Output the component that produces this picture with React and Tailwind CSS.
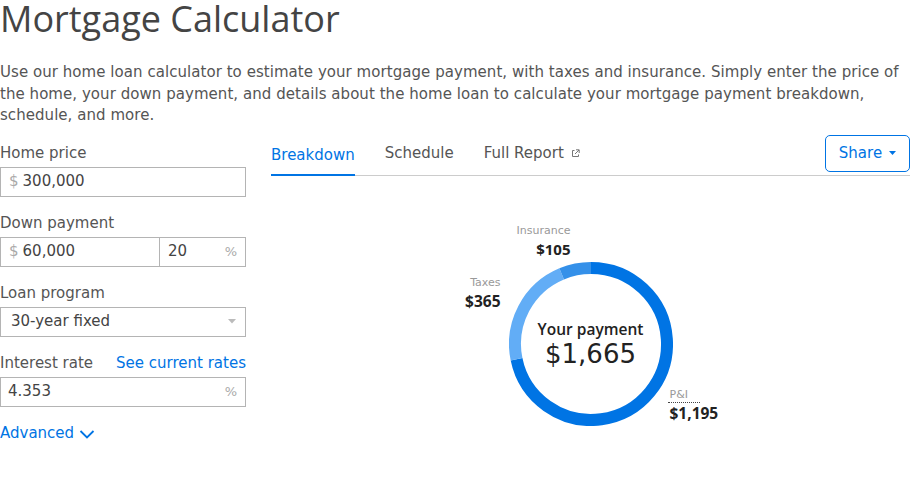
import React from "react";

const BLUE = "#0074e4";
const OPEN = { fontFamily: '"Open Sans", sans-serif' };

function polar(cx, cy, r, deg) {
  const a = ((deg - 90) * Math.PI) / 180;
  return [cx + r * Math.cos(a), cy + r * Math.sin(a)];
}

function Arc({ start, end, color }) {
  const r = 76;
  const [x1, y1] = polar(82, 82, r, start);
  const [x2, y2] = polar(82, 82, r, end);
  const large = end - start > 180 ? 1 : 0;
  return (
    <path
      d={`M ${x1} ${y1} A ${r} ${r} 0 ${large} 1 ${x2} ${y2}`}
      fill="none"
      stroke={color}
      strokeWidth="12"
    />
  );
}

function Donut() {
  const total = 1665;
  const pi = (1195 / total) * 360;
  const tx = (365 / total) * 360;
  return (
    <div className="relative w-[164px] h-[164px]">
      <svg width="164" height="164" viewBox="0 0 164 164" className="block">
        <Arc start={0} end={pi} color="#0074e4" />
        <Arc start={pi} end={pi + tx} color="#62adf6" />
        <Arc start={pi + tx} end={360} color="#3490e9" />
      </svg>
      <div className="absolute inset-0 flex flex-col items-center justify-center pt-[3px]">
        <div className="text-[15.5px] leading-[18px] font-semibold text-[#222]" style={OPEN}>Your payment</div>
        <div className="text-[26px] leading-[32px] text-[#222]">$1,665</div>
      </div>
      <div className="absolute top-[-39px] right-[102px] text-right whitespace-nowrap">
        <div className="text-[11px] leading-[16px] text-[#999]">Insurance</div>
        <div className="text-[15px] leading-[20px] font-bold text-[#222]" style={OPEN}>$105</div>
      </div>
      <div className="absolute top-[13px] right-[172px] text-right whitespace-nowrap">
        <div className="text-[11px] leading-[16px] text-[#999]">Taxes</div>
        <div className="text-[15.5px] leading-[20px] font-bold text-[#222]" style={OPEN}>$365</div>
      </div>
      <div className="absolute top-[125px] left-[161px] whitespace-nowrap">
        <div className="text-[11px] leading-[16px] text-[#999] border-b border-dotted border-[#444] w-[32px] h-[16px] -ml-[2px] pl-[2px]">P&amp;I</div>
        <div className="text-[15.5px] leading-[20px] font-bold text-[#222]" style={OPEN}>$1,195</div>
      </div>
    </div>
  );
}

function Field({ children }) {
  return (
    <div className="h-[30px] border border-[#b4b4b4] flex items-center px-[8px] text-[15px] text-[#444] bg-white">
      {children}
    </div>
  );
}

function Label({ children }) {
  return <div className="h-[20px] leading-[20px] text-[15px] text-[#555] mb-[4px]">{children}</div>;
}

export default function App() {
  return (
    <div
      className="w-[910px] h-[490px] bg-white overflow-hidden"
      style={{ fontFamily: '"DejaVu Sans", "Open Sans", sans-serif' }}
    >
      <h1 className="text-[36px] leading-[38px] text-[#444] font-normal" style={OPEN}>
        Mortgage Calculator
      </h1>
      <p className="mt-[24px] text-[15px] leading-[21.5px] text-[#555] tracking-[0.05px]">
        Use our home loan calculator to estimate your mortgage payment, with taxes and insurance. Simply enter the price of
        <br />
        the home, your down payment, and details about the home loan to calculate your mortgage payment breakdown,
        <br />
        schedule, and more.
      </p>
      <div className="flex gap-[25px] mt-[8px]">
        <div className="w-[246px] flex flex-col gap-[16px] pt-[8px]">
          <div>
            <Label>Home price</Label>
            <Field>
              <span className="text-[#aaa] mr-[4px]">$</span>300,000
            </Field>
          </div>
          <div>
            <Label>Down payment</Label>
            <div className="flex">
              <div className="w-[160px]">
                <Field>
                  <span className="text-[#aaa] mr-[4px]">$</span>60,000
                </Field>
              </div>
              <div className="flex-1 -ml-px">
                <Field>
                  <span className="flex-1">20</span>
                  <span className="text-[#aaa] text-[13px]">%</span>
                </Field>
              </div>
            </div>
          </div>
          <div>
            <Label>Loan program</Label>
            <div className="h-[30px] border border-[#b4b4b4] flex items-center pl-[10px] pr-[9px] text-[15px] text-[#444]">
              <span className="flex-1">30-year fixed</span>
              <svg width="8" height="5" viewBox="0 0 8 5"><path d="M0 0h8L4 4.5z" fill="#bbb" /></svg>
            </div>
          </div>
          <div>
            <div className="flex justify-between h-[20px] leading-[20px] text-[15px] mb-[4px]">
              <span className="text-[#555]">Interest rate</span>
              <span style={{ color: BLUE }}>See current rates</span>
            </div>
            <Field>
              <span className="flex-1 -ml-[1px]">4.353</span>
              <span className="text-[#aaa] text-[13px]">%</span>
            </Field>
          </div>
          <div className="flex items-center gap-[5px] h-[20px] text-[15px] mt-[1px]" style={{ color: BLUE }}>
            <span>Advanced</span>
            <svg width="16" height="10" viewBox="0 0 16 10"><path d="M1.5 2l6.5 6.5 6.5-6.5" fill="none" stroke={BLUE} strokeWidth="1.8" /></svg>
          </div>
        </div>
        <div className="flex-1 flex flex-col">
          <div className="flex items-end border-b border-[#ccc] h-[41px]">
            <div className="h-full flex items-center border-b-[2px] border-[#0074e4] -mb-[1.5px] text-[15px] text-[#0074e4] pt-[1px]">Breakdown</div>
            <div className="h-full flex items-center ml-[30px] text-[15px] text-[#555] pb-[2px]">Schedule</div>
            <div className="h-full flex items-center ml-[30px] text-[15px] text-[#555] pb-[2px]">
              Full Report
              <svg className="ml-[7px]" width="9" height="9" viewBox="0 0 9 9">
                <path d="M3.5 1.5h-2v6h6v-2" fill="none" stroke="#777" strokeWidth="1" />
                <path d="M5 0.8h3.2v3.2M8 1L4 5" fill="none" stroke="#777" strokeWidth="1" />
              </svg>
            </div>
            <div className="flex-1" />
            <div className="self-start h-[37px] w-[85px] border border-[#0074e4] rounded-[5px] flex items-center justify-center gap-[7px] text-[15px] text-[#0074e4]">
              <span>Share</span>
              <svg width="7" height="4" viewBox="0 0 7 4"><path d="M0 0h7L3.5 4z" fill="#0074e4" /></svg>
            </div>
          </div>
          <div className="flex justify-center mt-[86px]">
            <Donut />
          </div>
        </div>
      </div>
    </div>
  );
}
